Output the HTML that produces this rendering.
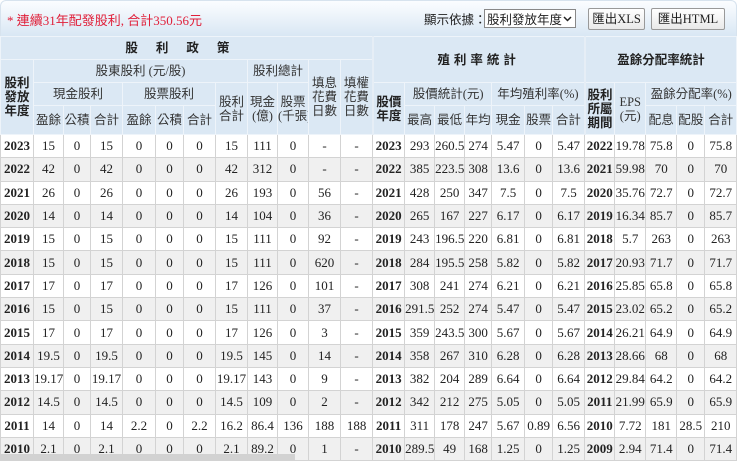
<!DOCTYPE html><html><head><meta charset="utf-8"><style>
*{margin:0;padding:0;box-sizing:border-box}
body{width:740px;height:461px;overflow:hidden;background:#fff;font-family:"Liberation Serif","Noto Serif CJK SC",serif;position:relative}
.top{position:absolute;left:0;top:0;width:737px;height:36px;background:linear-gradient(#fbfdff,#d9e7f4);border:1px solid #d7e3ee;border-bottom:none;border-radius:6px 6px 0 0}
.note{position:absolute;left:7px;top:10px;color:#e0203a;font-size:13px;font-family:"Liberation Serif","Noto Sans CJK TC",serif}
.ctl{position:absolute;top:9px;font-size:12.5px;color:#222;font-family:"Liberation Serif","Noto Sans CJK TC",serif}
.sel{position:absolute;left:484px;top:9px;width:92px;height:19px;border:1px solid #888;background:#fff;font-size:12.5px;padding-left:2px;line-height:17px;font-family:"Noto Sans CJK TC",sans-serif;color:#222}
.sel svg{position:absolute;right:3px;top:6px}
.btn{position:absolute;top:8px;height:22px;border:1px solid #999;border-radius:2px;background:linear-gradient(#fff,#e9e9e9);font-size:12.5px;line-height:20px;text-align:center;color:#222;font-family:"Liberation Serif","Noto Sans CJK TC",serif}
table{position:absolute;left:0;top:36px;border-collapse:collapse;table-layout:fixed;width:737px}
td,th{border:1px solid #d3d3d3;text-align:center;font-size:13px;color:#222;overflow:hidden;white-space:nowrap}
th{background:#dbe8f4;font-weight:normal;font-family:"Liberation Serif","Noto Sans CJK TC",sans-serif;font-size:12.5px;color:#333;line-height:14px;border-color:#eef4fa}
th.b{font-weight:bold;color:#222}
tr.h1 th{height:23px}tr.h2 th{height:23px}tr.h3 th{height:23px}tr.h4 th{height:29px}
td{height:23.3px;padding:0}
td.y{font-weight:bold}
tr.g td{background:#f0f0f0}
.sep{border-left:2px solid #e6eef6}
.sb{position:absolute;left:0;top:454px;width:295px;height:7px;background:#d2d2d2}
</style></head><body>
<div class="top"></div>
<div class="note">* 連續31年配發股利, 合計350.56元</div>
<div class="ctl" style="left:424px">顯示依據：</div>
<div class="sel">股利發放年度<svg width="9" height="6" viewBox="0 0 9 6"><path d="M1 1 L4.5 4.5 L8 1" stroke="#222" stroke-width="1.5" fill="none"/></svg></div>
<div class="btn" style="left:588px;width:57px">匯出XLS</div>
<div class="btn" style="left:651px;width:74px">匯出HTML</div>
<table>
<colgroup><col style="width:33px"><col style="width:30px"><col style="width:27px"><col style="width:32px"><col style="width:33px"><col style="width:28px"><col style="width:32px"><col style="width:32px"><col style="width:30px"><col style="width:31px"><col style="width:32px"><col style="width:32px">
<col style="width:32px"><col style="width:30px"><col style="width:30px"><col style="width:27px"><col style="width:33px"><col style="width:28px"><col style="width:32px"><col style="width:30px"><col style="width:31px"><col style="width:31px"><col style="width:28px"><col style="width:32px"></colgroup>
<tr class="h1"><th colspan="12" class="b" style="letter-spacing:18px">股利政策</th><th colspan="7" rowspan="2" class="b sep" style="letter-spacing:4px">殖利率統計</th><th colspan="5" rowspan="2" class="b sep">盈餘分配率統計</th></tr>
<tr class="h2"><th rowspan="3" class="b">股利<br>發放<br>年度</th><th colspan="7">股東股利 (元/股)</th><th colspan="2">股利總計</th><th rowspan="3">填息<br>花費<br>日數</th><th rowspan="3">填權<br>花費<br>日數</th></tr>
<tr class="h3"><th colspan="3">現金股利</th><th colspan="3">股票股利</th><th rowspan="2">股利<br>合計</th><th rowspan="2">現金<br>(億)</th><th rowspan="2">股票<br>(千張)</th><th rowspan="2" class="b sep">股價<br>年度</th><th colspan="3">股價統計(元)</th><th colspan="3">年均殖利率(%)</th><th rowspan="2" class="b sep">股利<br>所屬<br>期間</th><th rowspan="2">EPS<br>(元)</th><th colspan="3">盈餘分配率(%)</th></tr>
<tr class="h4"><th>盈餘</th><th>公積</th><th>合計</th><th>盈餘</th><th>公積</th><th>合計</th><th>最高</th><th>最低</th><th>年均</th><th>現金</th><th>股票</th><th>合計</th><th>配息</th><th>配股</th><th>合計</th></tr>
<tr><td class="y">2023</td><td>15</td><td>0</td><td>15</td><td>0</td><td>0</td><td>0</td><td>15</td><td>111</td><td>0</td><td>-</td><td>-</td><td class="y">2023</td><td>293</td><td>260.5</td><td>274</td><td>5.47</td><td>0</td><td>5.47</td><td class="y">2022</td><td>19.78</td><td>75.8</td><td>0</td><td>75.8</td></tr>
<tr class="g"><td class="y">2022</td><td>42</td><td>0</td><td>42</td><td>0</td><td>0</td><td>0</td><td>42</td><td>312</td><td>0</td><td>-</td><td>-</td><td class="y">2022</td><td>385</td><td>223.5</td><td>308</td><td>13.6</td><td>0</td><td>13.6</td><td class="y">2021</td><td>59.98</td><td>70</td><td>0</td><td>70</td></tr>
<tr><td class="y">2021</td><td>26</td><td>0</td><td>26</td><td>0</td><td>0</td><td>0</td><td>26</td><td>193</td><td>0</td><td>56</td><td>-</td><td class="y">2021</td><td>428</td><td>250</td><td>347</td><td>7.5</td><td>0</td><td>7.5</td><td class="y">2020</td><td>35.76</td><td>72.7</td><td>0</td><td>72.7</td></tr>
<tr class="g"><td class="y">2020</td><td>14</td><td>0</td><td>14</td><td>0</td><td>0</td><td>0</td><td>14</td><td>104</td><td>0</td><td>36</td><td>-</td><td class="y">2020</td><td>265</td><td>167</td><td>227</td><td>6.17</td><td>0</td><td>6.17</td><td class="y">2019</td><td>16.34</td><td>85.7</td><td>0</td><td>85.7</td></tr>
<tr><td class="y">2019</td><td>15</td><td>0</td><td>15</td><td>0</td><td>0</td><td>0</td><td>15</td><td>111</td><td>0</td><td>92</td><td>-</td><td class="y">2019</td><td>243</td><td>196.5</td><td>220</td><td>6.81</td><td>0</td><td>6.81</td><td class="y">2018</td><td>5.7</td><td>263</td><td>0</td><td>263</td></tr>
<tr class="g"><td class="y">2018</td><td>15</td><td>0</td><td>15</td><td>0</td><td>0</td><td>0</td><td>15</td><td>111</td><td>0</td><td>620</td><td>-</td><td class="y">2018</td><td>284</td><td>195.5</td><td>258</td><td>5.82</td><td>0</td><td>5.82</td><td class="y">2017</td><td>20.93</td><td>71.7</td><td>0</td><td>71.7</td></tr>
<tr><td class="y">2017</td><td>17</td><td>0</td><td>17</td><td>0</td><td>0</td><td>0</td><td>17</td><td>126</td><td>0</td><td>101</td><td>-</td><td class="y">2017</td><td>308</td><td>241</td><td>274</td><td>6.21</td><td>0</td><td>6.21</td><td class="y">2016</td><td>25.85</td><td>65.8</td><td>0</td><td>65.8</td></tr>
<tr class="g"><td class="y">2016</td><td>15</td><td>0</td><td>15</td><td>0</td><td>0</td><td>0</td><td>15</td><td>111</td><td>0</td><td>37</td><td>-</td><td class="y">2016</td><td>291.5</td><td>252</td><td>274</td><td>5.47</td><td>0</td><td>5.47</td><td class="y">2015</td><td>23.02</td><td>65.2</td><td>0</td><td>65.2</td></tr>
<tr><td class="y">2015</td><td>17</td><td>0</td><td>17</td><td>0</td><td>0</td><td>0</td><td>17</td><td>126</td><td>0</td><td>3</td><td>-</td><td class="y">2015</td><td>359</td><td>243.5</td><td>300</td><td>5.67</td><td>0</td><td>5.67</td><td class="y">2014</td><td>26.21</td><td>64.9</td><td>0</td><td>64.9</td></tr>
<tr class="g"><td class="y">2014</td><td>19.5</td><td>0</td><td>19.5</td><td>0</td><td>0</td><td>0</td><td>19.5</td><td>145</td><td>0</td><td>14</td><td>-</td><td class="y">2014</td><td>358</td><td>267</td><td>310</td><td>6.28</td><td>0</td><td>6.28</td><td class="y">2013</td><td>28.66</td><td>68</td><td>0</td><td>68</td></tr>
<tr><td class="y">2013</td><td>19.17</td><td>0</td><td>19.17</td><td>0</td><td>0</td><td>0</td><td>19.17</td><td>143</td><td>0</td><td>9</td><td>-</td><td class="y">2013</td><td>382</td><td>204</td><td>289</td><td>6.64</td><td>0</td><td>6.64</td><td class="y">2012</td><td>29.84</td><td>64.2</td><td>0</td><td>64.2</td></tr>
<tr class="g"><td class="y">2012</td><td>14.5</td><td>0</td><td>14.5</td><td>0</td><td>0</td><td>0</td><td>14.5</td><td>109</td><td>0</td><td>2</td><td>-</td><td class="y">2012</td><td>342</td><td>212</td><td>275</td><td>5.05</td><td>0</td><td>5.05</td><td class="y">2011</td><td>21.99</td><td>65.9</td><td>0</td><td>65.9</td></tr>
<tr><td class="y">2011</td><td>14</td><td>0</td><td>14</td><td>2.2</td><td>0</td><td>2.2</td><td>16.2</td><td>86.4</td><td>136</td><td>188</td><td>188</td><td class="y">2011</td><td>311</td><td>178</td><td>247</td><td>5.67</td><td>0.89</td><td>6.56</td><td class="y">2010</td><td>7.72</td><td>181</td><td>28.5</td><td>210</td></tr>
<tr class="g"><td class="y">2010</td><td>2.1</td><td>0</td><td>2.1</td><td>0</td><td>0</td><td>0</td><td>2.1</td><td>89.2</td><td>0</td><td>1</td><td>-</td><td class="y">2010</td><td>289.5</td><td>49</td><td>168</td><td>1.25</td><td>0</td><td>1.25</td><td class="y">2009</td><td>2.94</td><td>71.4</td><td>0</td><td>71.4</td></tr>
</table>
<div class="sb"></div>
</body></html>
